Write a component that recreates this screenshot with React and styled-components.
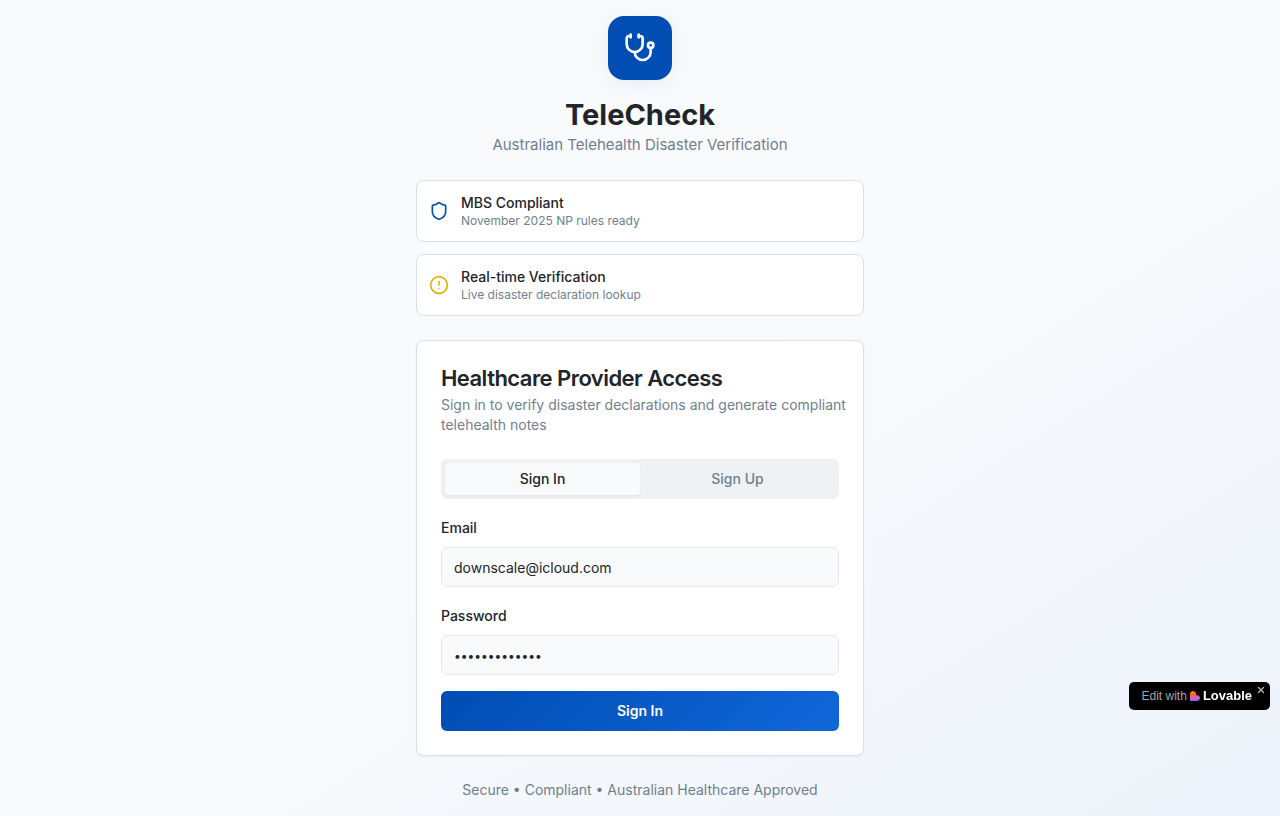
import React, { useState } from "react";
import styled, { createGlobalStyle } from "styled-components";
import { Stethoscope, Shield, CircleAlert, X } from "lucide-react";

const GlobalStyle = createGlobalStyle`
  *, *::before, *::after { box-sizing: border-box; }
  body {
    margin: 0;
    font-family: Inter, "Liberation Sans", sans-serif;
    font-size: 16px;
    line-height: 24px;
    color: #212529;
    -webkit-font-smoothing: antialiased;
  }
  h1, h2, p { margin: 0; }
  button, input { font: inherit; color: inherit; }
`;

const Page = styled.div`
  min-height: 100vh;
  display: flex;
  align-items: center;
  justify-content: center;
  padding: 16px;
  background: linear-gradient(to bottom right, #f9fafc 0%, #f9fafc 50%, #edf3fb 100%);
`;

const Column = styled.main`
  width: 100%;
  max-width: 448px;
  display: flex;
  flex-direction: column;
  gap: 24px;
`;

const Header = styled.header`
  display: flex;
  flex-direction: column;
  align-items: center;
  text-align: center;
`;

const LogoTile = styled.div`
  width: 64px;
  height: 64px;
  margin-bottom: 16px;
  display: flex;
  align-items: center;
  justify-content: center;
  border-radius: 16px;
  background: #004db3;
  color: #fff;
  box-shadow: 0 4px 20px rgba(0, 77, 179, 0.08);
`;

const AppName = styled.h1`
  font-size: 29px;
  line-height: 38px;
  font-weight: 700;
`;

const Tagline = styled.p`
  font-size: 15px;
  line-height: 22px;
  color: #707f8f;
`;

const Features = styled.div`
  display: grid;
  gap: 12px;
`;

const FeatureCard = styled.section`
  display: flex;
  align-items: center;
  gap: 12px;
  padding: 12px;
  border: 1px solid #d7dfe8;
  border-radius: 8px;
  background: #fff;

  svg { flex: none; color: ${(p) => p.$tone}; }
`;

const FeatureTitle = styled.p`
  font-size: 14px;
  line-height: 20px;
  font-weight: 500;
`;

const FeatureText = styled.p`
  font-size: 12px;
  line-height: 16px;
  color: #707f8f;
`;

const AccessCard = styled.section`
  padding: 24px;
  border: 1px solid #d7dfe8;
  border-radius: 8px;
  background: #fff;
  box-shadow: 0 1px 2px rgba(0, 0, 0, 0.05);
`;

const CardTitle = styled.h2`
  margin-bottom: 4px;
  font-size: 22px;
  line-height: 26px;
  font-weight: 600;
  letter-spacing: -0.025em;
`;

const CardText = styled.p`
  margin-right: -12px;
  font-size: 14px;
  line-height: 20px;
  color: #707f8f;
`;

const TabList = styled.div`
  display: grid;
  grid-template-columns: 1fr 1fr;
  height: 40px;
  margin: 24px 0 16px;
  padding: 4px;
  border-radius: 6px;
  background: #eef1f4;
`;

const Tab = styled.button`
  border: 0;
  border-radius: 4px;
  padding: 0 12px;
  font-size: 14px;
  line-height: 20px;
  font-weight: 500;
  cursor: pointer;
  color: ${(p) => (p.$active ? "#212529" : "#707f8f")};
  background: ${(p) => (p.$active ? "#f9fafc" : "transparent")};
  box-shadow: ${(p) => (p.$active ? "0 1px 2px rgba(0, 0, 0, 0.05)" : "none")};
`;

const Form = styled.form`
  display: grid;
  gap: 16px;
`;

const Field = styled.div`
  display: grid;
  gap: 6px;
`;

const Label = styled.label`
  font-size: 14px;
  line-height: 26px;
  font-weight: 500;
`;

const Input = styled.input`
  width: 100%;
  height: 40px;
  padding: 8px 12px;
  border: 1px solid #e4e8ed;
  border-radius: 6px;
  background: #f9fafc;
  font-size: ${(p) => (p.type === "password" ? "12px" : "14px")};
  line-height: 20px;
  outline: none;
`;

const SubmitButton = styled.button`
  height: 40px;
  border: 0;
  border-radius: 6px;
  color: #fff;
  font-size: 14px;
  line-height: 20px;
  font-weight: 600;
  cursor: pointer;
  background: linear-gradient(135deg, #004db3, #1166d9);
`;

const Footer = styled.footer`
  text-align: center;
  font-size: 14px;
  line-height: 20px;
  color: #707f8f;
`;

const Badge = styled.aside`
  position: fixed;
  right: 10px;
  bottom: 106px;
  display: flex;
  height: 28px;
  border-radius: 5px;
  background: #000;
  font-family: "Liberation Sans", sans-serif;
`;

const BadgeLink = styled.a`
  display: flex;
  align-items: center;
  gap: 3px;
  padding-left: 13px;
  font-size: 12px;
  color: #a3a3ab;
  text-decoration: none;
`;

const BrandName = styled.span`
  font-size: 13px;
  font-weight: 700;
  color: #fff;
`;

const BadgeClose = styled.button`
  display: flex;
  align-self: flex-start;
  padding: 3px 4px;
  border: 0;
  background: none;
  color: #b5b5bc;
  cursor: pointer;
`;

function LovableMark() {
  return (
    <svg width="10" height="10" viewBox="0 0 22 22" aria-hidden="true">
      <defs>
        <linearGradient id="lovable-fill" x1="8" y1="1" x2="10" y2="22" gradientUnits="userSpaceOnUse">
          <stop offset="0.1" stopColor="#ff7a14" />
          <stop offset="0.4" stopColor="#ff5a3c" />
          <stop offset="0.65" stopColor="#e75fc0" />
          <stop offset="1" stopColor="#4c72ff" />
        </linearGradient>
      </defs>
      <path
        fill="url(#lovable-fill)"
        d="M6.6 0C10.3 0 13.2 3 13.2 6.7V9.2H15.4C19.1 9.2 22 12.1 22 15.6S19.1 22 15.4 22H0V6.7C0 3 3 0 6.6 0Z"
      />
    </svg>
  );
}

export default function App() {
  const [mode, setMode] = useState("in");
  const [email, setEmail] = useState("downscale@icloud.com");
  const [password, setPassword] = useState("telehealth-25");
  const action = mode === "in" ? "Sign In" : "Sign Up";

  return (
    <>
      <GlobalStyle />
      <Page>
        <Column>
          <Header>
            <LogoTile>
              <Stethoscope size={32} />
            </LogoTile>
            <AppName>TeleCheck</AppName>
            <Tagline>Australian Telehealth Disaster Verification</Tagline>
          </Header>

          <Features>
            <FeatureCard $tone="#004db3">
              <Shield size={20} />
              <div>
                <FeatureTitle>MBS Compliant</FeatureTitle>
                <FeatureText>November 2025 NP rules ready</FeatureText>
              </div>
            </FeatureCard>
            <FeatureCard $tone="#e7b008">
              <CircleAlert size={20} />
              <div>
                <FeatureTitle>Real-time Verification</FeatureTitle>
                <FeatureText>Live disaster declaration lookup</FeatureText>
              </div>
            </FeatureCard>
          </Features>

          <AccessCard>
            <CardTitle>Healthcare Provider Access</CardTitle>
            <CardText>
              Sign in to verify disaster declarations and generate compliant telehealth notes
            </CardText>
            <TabList role="tablist">
              <Tab type="button" role="tab" aria-selected={mode === "in"} $active={mode === "in"} onClick={() => setMode("in")}>
                Sign In
              </Tab>
              <Tab type="button" role="tab" aria-selected={mode === "up"} $active={mode === "up"} onClick={() => setMode("up")}>
                Sign Up
              </Tab>
            </TabList>
            <Form onSubmit={(e) => e.preventDefault()}>
              <Field>
                <Label htmlFor="email">Email</Label>
                <Input id="email" type="email" value={email} onChange={(e) => setEmail(e.target.value)} />
              </Field>
              <Field>
                <Label htmlFor="password">Password</Label>
                <Input id="password" type="password" value={password} onChange={(e) => setPassword(e.target.value)} />
              </Field>
              <SubmitButton type="submit">{action}</SubmitButton>
            </Form>
          </AccessCard>

          <Footer>Secure • Compliant • Australian Healthcare Approved</Footer>
        </Column>
      </Page>

      <Badge>
        <BadgeLink href="#lovable">
          Edit with
          <LovableMark />
          <BrandName>Lovable</BrandName>
        </BadgeLink>
        <BadgeClose type="button" aria-label="Close">
          <X size={10} strokeWidth={3} />
        </BadgeClose>
      </Badge>
    </>
  );
}
